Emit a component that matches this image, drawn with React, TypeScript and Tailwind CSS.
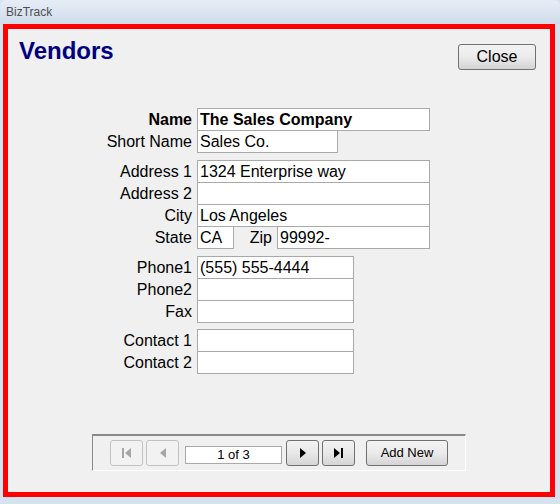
import React from "react";

const Field: React.FC<{ w: string; value?: string; bold?: boolean }> = ({ w, value, bold }) => (
  <div
    className={`${w} h-[23px] border border-[#a9a9a9] bg-white flex items-center pl-[2px] text-[16px] leading-[20px] text-black whitespace-nowrap ${
      bold ? "font-bold" : ""
    }`}
  >
    {value}
  </div>
);

const Row: React.FC<{ label: string; bold?: boolean; children: React.ReactNode; first?: boolean }> = ({
  label,
  bold,
  children,
  first,
}) => (
  <div className={`flex items-center h-[23px] ${first ? "" : "-mt-px"}`}>
    <div
      className={`w-[105px] pr-[5px] text-right text-[16px] leading-[20px] text-black whitespace-nowrap ${
        bold ? "font-bold" : ""
      }`}
    >
      {label}
    </div>
    {children}
  </div>
);

const Tri: React.FC<{ dir: "l" | "r"; color: string }> = ({ dir, color }) => (
  <svg width="6" height="10" viewBox="0 0 6 10">
    {dir === "l" ? (
      <polygon points="6,0 6,10 0,5" fill={color} />
    ) : (
      <polygon points="0,0 0,10 6,5" fill={color} />
    )}
  </svg>
);

const Bar: React.FC<{ color: string }> = ({ color }) => (
  <div className="w-[2px] h-[10px]" style={{ background: color }} />
);

const NavBtn: React.FC<{ disabled?: boolean; children: React.ReactNode }> = ({ disabled, children }) => (
  <div
    className={`w-[33px] h-[26px] rounded-[3px] border flex items-center justify-center gap-[1px] ${
      disabled
        ? "border-[#c2c2c2] bg-[#f2f2f2]"
        : "border-[#707070] bg-gradient-to-b from-[#f3f3f3] via-[#e8e8e8] to-[#d6d6d6]"
    }`}
  >
    {children}
  </div>
);

export default function App() {
  const dis = "#a6a6a6";
  return (
    <div className="w-[560px] h-[504px] bg-[#d7e2ef] overflow-hidden font-['Liberation_Sans',Arial,sans-serif] flex flex-col">
      {/* Title bar */}
      <div className="h-[24px] flex items-center pl-[6px] text-[12px] text-[#4f4f4f] bg-gradient-to-b from-[#e6edf6] to-[#d0dceb] rounded-t-[6px]">
        BizTrack
      </div>

      {/* Red framed form */}
      <div className="ml-[3px] w-[552px] h-[473px] border-[5px] border-[#ff0000] bg-[#f0f0f0] flex flex-col">
        {/* Header */}
        <div className="flex justify-between items-start pt-[8px] pl-[11px] pr-[14px]">
          <div className="text-[24px] leading-[28px] font-bold text-[#000080]">Vendors</div>
          <div className="mt-[7px] w-[78px] h-[26px] rounded-[3px] border border-[#707070] bg-gradient-to-b from-[#f3f3f3] via-[#ebebeb] to-[#d4d4d4] flex items-center justify-center text-[16px] text-black">
            Close
          </div>
        </div>

        {/* Form */}
        <div className="ml-[84px] mt-[38px] flex flex-col">
          <Row label="Name" bold first>
            <Field w="w-[233px]" value="The Sales Company" bold />
          </Row>
          <Row label="Short Name">
            <Field w="w-[141px]" value="Sales Co." />
          </Row>

          <div className="mt-[7px] flex flex-col">
            <Row label="Address 1" first>
              <Field w="w-[233px]" value="1324 Enterprise way" />
            </Row>
            <Row label="Address 2">
              <Field w="w-[233px]" />
            </Row>
            <Row label="City">
              <Field w="w-[233px]" value="Los Angeles" />
            </Row>
            <Row label="State">
              <Field w="w-[37px]" value="CA" />
              <div className="w-[43px] pr-[5px] text-right text-[16px] leading-[20px] text-black">Zip</div>
              <Field w="w-[153px]" value="99992-" />
            </Row>
          </div>

          <div className="mt-[7px] flex flex-col">
            <Row label="Phone1" first>
              <Field w="w-[157px]" value="(555) 555-4444" />
            </Row>
            <Row label="Phone2">
              <Field w="w-[157px]" />
            </Row>
            <Row label="Fax">
              <Field w="w-[157px]" />
            </Row>
          </div>

          <div className="mt-[6px] flex flex-col">
            <Row label="Contact 1" first>
              <Field w="w-[157px]" />
            </Row>
            <Row label="Contact 2">
              <Field w="w-[157px]" />
            </Row>
          </div>
        </div>

        {/* Navigation */}
        <div className="ml-[84px] mt-[60px] w-[374px] h-[37px] border-t-2 border-l border-t-[#8a8a8a] border-l-[#8a8a8a] border-b border-r border-b-white border-r-white flex items-start pt-[4px] pl-[17px]">
          <NavBtn disabled>
            <Bar color={dis} />
            <Tri dir="l" color={dis} />
          </NavBtn>
          <div className="ml-[3px]">
            <NavBtn disabled>
              <Tri dir="l" color={dis} />
            </NavBtn>
          </div>
          <div className="ml-[6px] mt-[6px] w-[97px] h-[18px] border border-[#a9a9a9] bg-white flex items-center justify-center text-[13px] text-black">
            1 of 3
          </div>
          <div className="ml-[4px]">
            <NavBtn>
              <Tri dir="r" color="#000" />
            </NavBtn>
          </div>
          <div className="ml-[3px]">
            <NavBtn>
              <Tri dir="r" color="#000" />
              <Bar color="#000" />
            </NavBtn>
          </div>
          <div className="ml-[11px] w-[82px] h-[26px] rounded-[3px] border border-[#707070] bg-gradient-to-b from-[#f3f3f3] via-[#ebebeb] to-[#d4d4d4] flex items-center justify-center text-[13px] text-black">
            Add New
          </div>
        </div>
      </div>
    </div>
  );
}
